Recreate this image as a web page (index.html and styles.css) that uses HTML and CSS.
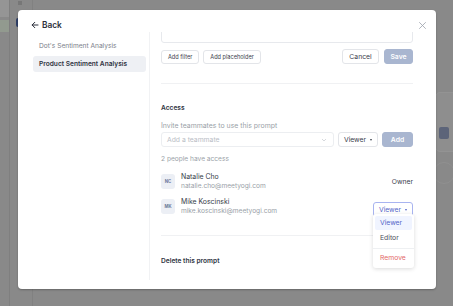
FILE: index.html
```html
<!DOCTYPE html>
<html>
<head>
<meta charset="utf-8">
<link rel="stylesheet" href="styles.css">
</head>
<body>
<div class="app">
  <div class="rail">
    <div class="rail-top"></div>
    <div class="rail-green"></div>
  </div>
  <div class="nav">
    <div class="nav-icon"></div>
    <div class="nav-btn"></div>
  </div>
  <div class="main">
    <div class="side-card">
      <div class="side-btn"></div>
    </div>
    <div class="side-card2"></div>
  </div>
</div>

<div class="modal">
  <div class="modal-head">
    <div class="back">
      <svg class="back-arrow" width="8" height="8" viewBox="0 0 8 8"><path d="M7 4H1.2M3.8 1.3 1.1 4l2.7 2.7" fill="none" stroke="#2b2f3a" stroke-width="1" stroke-linecap="round" stroke-linejoin="round"/></svg>
      <span>Back</span>
    </div>
    <svg class="close" width="7" height="7" viewBox="0 0 7 7"><path d="M.5.5l6 6M6.5.5l-6 6" stroke="#9ca1ab" stroke-width=".8" stroke-linecap="round"/></svg>
  </div>
  <div class="modal-body">
    <div class="list">
      <div class="list-item">Dot's Sentiment Analysis</div>
      <div class="list-item active">Product Sentiment Analysis</div>
    </div>
    <div class="pane">
      <div class="pane-inner">
        <div class="textarea"></div>
        <div class="btn-row">
          <div class="btn-group">
            <span class="btn">Add filter</span>
            <span class="btn">Add placeholder</span>
          </div>
          <div class="btn-group">
            <span class="btn btn-lg cancel">Cancel</span>
            <span class="btn btn-lg primary save">Save</span>
          </div>
        </div>
        <div class="divider d1"></div>
        <div class="section-title access">Access</div>
        <div class="muted invite">Invite teammates to use this prompt</div>
        <div class="invite-row">
          <div class="select-input">
            <span>Add a teammate</span>
            <svg width="6" height="4" viewBox="0 0 6 4"><path d="M1 1l2 2 2-2" fill="none" stroke="#c4c8cf" stroke-width=".7"/></svg>
          </div>
          <span class="btn btn-lg role">Viewer <i class="caret"></i></span>
          <span class="btn btn-lg primary add">Add</span>
        </div>
        <div class="muted count">2 people have access</div>
        <div class="person p1">
          <div class="avatar">NC</div>
          <div class="who">
            <div class="name">Natalie Cho</div>
            <div class="email">natalie.cho@meetyogi.com</div>
          </div>
          <div class="owner">Owner</div>
        </div>
        <div class="person p2">
          <div class="avatar">MK</div>
          <div class="who">
            <div class="name">Mike Koscinski</div>
            <div class="email">mike.koscinski@meetyogi.com</div>
          </div>
          <div class="role-wrap">
            <span class="btn btn-lg role open">Viewer <i class="caret"></i></span>
            <div class="menu">
              <div class="menu-item sel">Viewer</div>
              <div class="menu-item editor">Editor</div>
              <div class="menu-sep"></div>
              <div class="menu-item danger">Remove</div>
            </div>
          </div>
        </div>
        <div class="divider d2"></div>
        <div class="section-title delete">Delete this prompt</div>
      </div>
    </div>
  </div>
</div>
</body>
</html>
```
FILE: styles.css
```css
* { box-sizing: border-box; }
html, body { margin: 0; padding: 0; }
body {
  width: 453px;
  height: 306px;
  overflow: hidden;
  background: #898989;
  font-family: Inter, "Noto Sans", sans-serif;
  position: relative;
}
.app {
  display: flex;
  height: 306px;
}
.rail {
  width: 10px;
  border-right: 1px solid #7f7f7f;
  display: flex;
  flex-direction: column;
}
.rail-top { height: 17px; background: #959595; }
.rail-green { height: 12px; background: #929a8f; margin-top: 3px; }
.nav {
  width: 23px;
  border-right: 1px solid #818181;
}
.nav-icon {
  width: 4px; height: 4px; background: #777;
  margin: 1px 0 0 8px;
}
.nav-btn {
  width: 6px; height: 9px; background: #2f3f66; border-radius: 2px;
  margin: 13px 0 0 6px;
}
.main { flex: 1; position: relative; }
.side-card {
  position: absolute; left: 402px; top: 92px;
  width: 40px; height: 60px;
  background: #8e8e8e; border-radius: 5px;
  border: 1px solid #939393;
}
.side-btn {
  position: absolute; right: 25px; top: 34px;
  width: 10px; height: 12px; background: #5c6479; border-radius: 2px;
}
.side-card2 {
  position: absolute; left: 400px; top: 162px;
  width: 22px; height: 22px; border-radius: 50%;
  border: 1px solid #909090;
}

.modal {
  position: absolute;
  left: 18px; top: 10px;
  width: 418px; height: 279px;
  background: #fff;
  border-radius: 4px;
  box-shadow: 0 1px 2px rgba(0,0,0,.25);
  display: flex;
  flex-direction: column;
  color: #2f3442;
}
.modal-head {
  height: 22px;
  display: flex;
  align-items: center;
  justify-content: space-between;
  padding: 8px 10px 0 13px;
}
.back {
  display: flex; align-items: center; gap: 3px;
  font-size: 8.3px; font-weight: 600; color: #2b2f3a;
}
.close { margin-top: 1px; }
.modal-body {
  flex: 1;
  display: flex;
  margin-bottom: 9px;
}
.list {
  width: 132px;
  border-right: 1px solid #f1f2f4;
  padding: 6px 3px 0 15px;
  display: flex; flex-direction: column; gap: 2px;
}
.list-item {
  height: 16px; line-height: 16px;
  padding-left: 6px;
  font-size: 6.6px; color: #7b808a;
  border-radius: 3px;
}
.list-item.active { background: #eef0f4; color: #2f3442; font-weight: 600; }
.pane {
  flex: 1;
  overflow: hidden;
  padding: 0 23px 0 11px;
}
.pane-inner { margin-top: -20px; }
.textarea {
  height: 31px;
  border: 1px solid #e7e9ed;
  border-radius: 3px;
}
.btn-row {
  display: flex; justify-content: space-between; align-items: center;
  margin-top: 6px;
  height: 15px;
}
.btn-group { display: flex; gap: 4px; align-items: center; }
.btn {
  display: inline-flex; align-items: center; justify-content: center;
  height: 14px; padding: 0 6px;
  border: 1px solid #e3e5e9; border-radius: 3px;
  font-size: 5.6px; color: #3b404c; background: #fff;
}
.btn-lg { height: 15px; font-size: 6.8px; }
.cancel { width: 37px; margin-right: 1px; }
.primary { background: #a9b6d0; border-color: #a9b6d0; color: #fff; font-weight: 600; }
.save { width: 29px; }
.divider { height: 1px; background: #f0f1f3; }
.d1 { margin-top: 19px; }
.section-title { font-size: 6.6px; font-weight: 600; color: #2f3442; line-height: 9px; height: 9px; }
.access { margin-top: 20px; }
.muted { font-size: 6.6px; color: #9a9fa8; line-height: 9px; height: 9px; }
.invite { margin-top: 8px; font-size: 6.9px; }
.invite-row {
  display: flex; gap: 4px; margin-top: 2px; align-items: center;
  height: 15px;
}
.select-input {
  flex: 1; height: 15px;
  border: 1px solid #eceef1; border-radius: 3px;
  display: flex; align-items: center; justify-content: space-between;
  padding: 0 6px 0 5px;
  font-size: 6.8px; color: #b9bdc5;
}
.role { width: 40px; gap: 4px; }
.caret {
  display: inline-block; width: 0; height: 0;
  border-left: 1.5px solid transparent; border-right: 1.5px solid transparent;
  border-top: 2px solid currentColor;
}
.add { width: 31px; }
.count { margin-top: 8px; }
.person { display: flex; align-items: center; gap: 6px; height: 15px; }
.p1 { margin-top: 10px; }
.p2 { margin-top: 10px; }
.avatar {
  width: 14px; height: 15px; border-radius: 3px;
  background: #eceff5; color: #6a7899;
  font-size: 4.3px; font-weight: 700;
  display: flex; align-items: center; justify-content: center;
}
.who { flex: 1; display: flex; flex-direction: column; gap: 1px; }
.name { font-size: 6.9px; color: #363b47; line-height: 9px; height: 9px; }
.email { font-size: 6.6px; color: #9a9fa8; line-height: 9px; height: 9px; }
.owner { font-size: 6.8px; color: #3b404c; }
.role-wrap { position: relative; }
.role.open { border-color: #a8b4f0; color: #5566c8; }
.menu {
  position: absolute; top: 18px; right: -1px;
  width: 41px;
  background: #fff; border-radius: 3px;
  box-shadow: 0 1px 4px rgba(0,0,0,.15);
  padding: 2px 0 3px;
  z-index: 2;
}
.menu-item {
  height: 14px; line-height: 14px; padding-left: 5px;
  font-size: 6.8px; color: #4a4f5a; margin: 0 2px;
  border-radius: 2px;
}
.menu-item.sel { background: #f0f4ff; color: #5566c8; }
.editor { margin-top: 1px; }
.menu-sep { height: 1px; background: #eef0f2; margin: 3px 0 2px; }
.danger { color: #e36a6a; }
.d2 { margin-top: 21px; margin-right: 40px; }
.delete { margin-top: 21px; }
```
